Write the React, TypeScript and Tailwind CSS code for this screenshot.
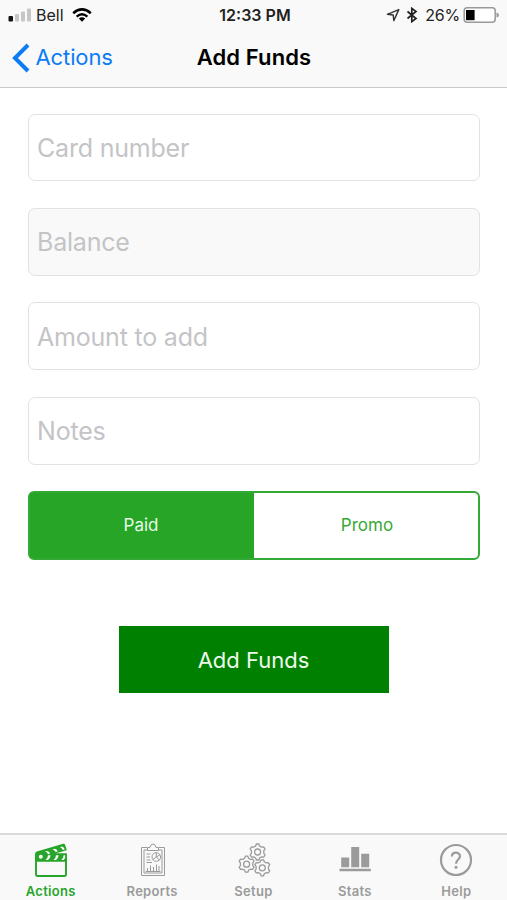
import React, { useState } from 'react';

const ActionsIcon = () => (
  <svg width="34" height="34" viewBox="0 0 34 34" fill="none">
    <path d="M2 11V31.2Q2 33 3.8 33H30.2Q32 33 32 31.2V11" stroke="currentColor" strokeWidth="1.9" />
    <path d="M1.2 10.4Q1.2 8.8 2.8 8.4L29.2 0.8Q30.6 0.5 31 1.6L32.8 7.2L22 10.2H32.8V18.8H1.2Z" fill="currentColor" />
    <circle cx="6.8" cy="13.8" r="2" fill="#f9f9f9" />
    <path d="M10.8 8.6L13 8Q15.4 8.4 16.2 10.6L14 11.2Q13 9 10.8 8.6ZM18.4 6.4L20.6 5.8Q23 6.2 23.8 8.4L21.6 9Q20.6 6.8 18.4 6.4ZM26 4.2L28 3.6Q30 4.2 30.8 6.4L28.8 7Q28 4.6 26 4.2Z" fill="#f9f9f9" />
    <path d="M14 12.2H16.6Q16.4 15.6 14 17H11.4Q13.8 15.4 14 12.2ZM22 12.2H24.6Q24.4 15.6 22 17H19.4Q21.8 15.4 22 12.2ZM29.6 12.2H31.2V14.4Q30.8 16.2 29.6 17H27.2Q29.4 15.4 29.6 12.2Z" fill="#f9f9f9" />
  </svg>
);

const ReportsIcon = () => (
  <svg className="ml-px" width="26" height="34" viewBox="0 0 26 34" fill="none" stroke="currentColor" strokeWidth="1">
    <path d="M7 4.5H1.5V32.5H24.5V4.5H19" />
    <path d="M7.5 7H4V30H22V7H18.5" />
    <path d="M7.5 7.5V4.5H10Q10.5 1 13 1Q15.5 1 16 4.5H18.5V7.5Z" />
    <circle cx="16.3" cy="14" r="4.3" />
    <path d="M16.3 9.7V14L12.8 16.5M16.3 14L20 11.8M16.3 14L19.5 17" />
    <path d="M6.5 11H10.5M6.5 14H10M6.5 17H10.5M6.5 19.5H12" />
    <path d="M5.5 28.5H20.5M7.5 28V25M10.5 28V22.5M13.5 28V24M16.5 28V21.5M19 28V23" />
  </svg>
);

const Gear = ({ x, y }: { x: number; y: number }) => (
  <g transform={`translate(${x} ${y})`}>
    <path d="M-1.2 -8H1.2L2 -6L3.9 -4.9L6.1 -5.1L7.4 -3L6.2 -1.3V1.3L7.4 3L6.1 5.1L3.9 4.9L2 6L1.2 8H-1.2L-2 6L-3.9 4.9L-6.1 5.1L-7.4 3L-6.2 1.3V-1.3L-7.4 -3L-6.1 -5.1L-3.9 -4.9L-2 -6Z" />
    <circle r="3" />
  </g>
);

const SetupIcon = () => (
  <svg className="ml-px" width="34" height="34" viewBox="0 0 34 34" fill="none" stroke="currentColor" strokeWidth="1.3">
    <Gear x={20.6} y={9} />
    <Gear x={9.6} y={21.2} />
    <Gear x={25.3} y={24.8} />
  </svg>
);

const StatsIcon = () => (
  <svg width="34" height="34" viewBox="0 0 34 34" fill="currentColor">
    <path d="M3.2 14.5H11.2V24.3H3.2ZM13.2 4H21.2V24.3H13.2ZM23.2 10.8H31.2V24.3H23.2ZM1.5 25.8H32.8V28.2H1.5Z" />
  </svg>
);

const HelpIcon = () => (
  <svg width="34" height="34" viewBox="0 0 34 34" fill="none" stroke="currentColor">
    <circle cx="17" cy="17" r="15" strokeWidth="2.2" />
    <path d="M12.9 13.6C12.9 8.4 21 8.4 21 13.3C21 16.4 17 16.6 17 20.7" strokeWidth="2.2" />
    <circle cx="17" cy="24.2" r="1.5" fill="currentColor" stroke="none" />
  </svg>
);

const fields = [
  { id: 'card', placeholder: 'Card number', disabled: false },
  { id: 'balance', placeholder: 'Balance', disabled: true },
  { id: 'amount', placeholder: 'Amount to add', disabled: false },
  { id: 'notes', placeholder: 'Notes', disabled: false },
];

const tabs = [
  { id: 'actions', name: 'Actions', icon: <ActionsIcon /> },
  { id: 'reports', name: 'Reports', icon: <ReportsIcon /> },
  { id: 'setup', name: 'Setup', icon: <SetupIcon /> },
  { id: 'stats', name: 'Stats', icon: <StatsIcon /> },
  { id: 'help', name: 'Help', icon: <HelpIcon /> },
];

const StatusBar = () => (
  <div className="grid grid-cols-[1fr_auto_1fr] items-center h-[30px] pl-2 pr-[7px] text-black">
    <div className="flex items-center">
      <svg width="24" height="14" viewBox="0 0 24 14">
        <rect x="0.5" y="8" width="4.5" height="5.5" rx="1" fill="#111" />
        <rect x="7" y="6" width="4" height="7.5" rx="1" fill="#c6c6c6" />
        <rect x="13" y="3.5" width="4" height="10" rx="1" fill="#c6c6c6" />
        <rect x="19" y="0.5" width="4" height="13" rx="1" fill="#c6c6c6" />
      </svg>
      <span className="ml-1 text-[16px] text-[#222]">Bell</span>
      <svg className="ml-2" width="20" height="14" viewBox="0 0 20 14" fill="none" stroke="#000">
        <path d="M1.2 5.2Q10 -2.4 18.8 5.2" strokeWidth="2.5" />
        <path d="M4.6 8.6Q10 4 15.4 8.6" strokeWidth="2.3" />
        <path d="M6.8 10.6Q10 8 13.2 10.6L10 13.8Z" fill="#000" stroke="none" />
      </svg>
    </div>
    <span className="ml-[2px] text-[16px] font-semibold text-[#222]">12:33 PM</span>
    <div className="flex items-center justify-end">
      <svg width="14" height="14" viewBox="0 0 14 14" fill="none" stroke="#333" strokeWidth="1.4">
        <path d="M1.4 6.3L12.8 1.6L7.8 12.6L7.2 7Z" strokeLinejoin="round" />
      </svg>
      <svg className="ml-[6px]" width="12" height="16" viewBox="0 0 12 16" fill="none" stroke="#222" strokeWidth="1.7">
        <path d="M1.5 4.5L10 11.5L5.8 14.6V1.4L10 4.5L1.5 11.5" />
      </svg>
      <span className="ml-[7px] text-[16px] tracking-[-0.2px] text-[#222]">26%</span>
      <svg className="ml-[3px]" width="37" height="16" viewBox="0 0 37 16">
        <rect x="1.2" y="0.8" width="31" height="14.4" rx="3" fill="#fff" stroke="#999" strokeWidth="1.5" />
        <rect x="3" y="3" width="8.6" height="10.2" fill="#000" />
        <path d="M33.5 5.5Q36 6 36 8Q36 10 33.5 10.5Z" fill="#999" />
      </svg>
    </div>
  </div>
);

const App: React.FC = () => {
  const [activeTab, setActiveTab] = useState('actions');
  const [fundType, setFundType] = useState('paid');

  return (
    <div className="flex flex-col w-full h-screen bg-white overflow-hidden font-['Inter',sans-serif]">
      {/* Header */}
      <header className="h-[88px] shrink-0 bg-[#f9f9f9] border-b border-[#c9c9ca]">
        <StatusBar />
        <div className="grid grid-cols-[1fr_auto_1fr] items-center h-[55px] pl-3 pr-[11px]">
          <button className="flex items-center text-[#0b7cf4]">
            <svg width="18" height="30" viewBox="0 0 18 30" fill="none" stroke="currentColor" strokeWidth="4">
              <path d="M16 2L3 15L16 28" />
            </svg>
            <span className="ml-[5.5px] text-[22px] tracking-[-0.1px]">Actions</span>
          </button>
          <h1 className="text-[22px] font-semibold tracking-[0.1px] text-black">Add Funds</h1>
        </div>
      </header>

      {/* Form */}
      <main className="flex-1 px-[27.5px] pt-[25.6px]">
        <div className="flex flex-col gap-[26.6px]">
          {fields.map((field) => (
            <input
              key={field.id}
              placeholder={field.placeholder}
              disabled={field.disabled}
              className="h-[67.8px] w-full rounded-[7px] border-[1.5px] border-[#e2e2e3] bg-white disabled:bg-[#f9f9fa] px-[8.5px] pt-px text-[25px] tracking-[-0.2px] placeholder:text-[#c4c4c7] outline-none"
            />
          ))}
          <div className="flex h-[69px] -mt-[0.3px] rounded-[6px] border-2 border-[#35a935] bg-[#26a526] overflow-hidden text-[17px]">
            <button
              onClick={() => setFundType('paid')}
              className={`flex-1 pt-px ${fundType === 'paid' ? 'bg-[#26a526] text-[#e9fbe9]' : 'bg-white text-[#35a935]'}`}
            >
              <span className="mr-px">Paid</span>
            </button>
            <button
              onClick={() => setFundType('promo')}
              className={`flex-1 pt-px ${fundType === 'promo' ? 'bg-[#26a526] text-[#e9fbe9]' : 'bg-white text-[#35a935]'}`}
            >
              <span className="ml-[3px]">Promo</span>
            </button>
          </div>
        </div>
        <button className="block mx-auto mt-[66px] w-[270px] h-[67px] pt-[2px] bg-[#008000] text-[#edf9ed] text-[22px]">
          Add Funds
        </button>
      </main>

      {/* Tab Bar */}
      <nav className="grid grid-cols-5 h-[67px] shrink-0 bg-[#f9f9f9] border-t-2 border-[#dadadb]">
        {tabs.map((tab) => (
          <button
            key={tab.id}
            onClick={() => setActiveTab(tab.id)}
            className={`flex flex-col items-center pt-2 ${activeTab === tab.id ? 'text-[#26a52a]' : 'text-[#9b9b9b]'}`}
          >
            {tab.icon}
            <span className="mt-[4.5px] text-[13px] leading-[18px] font-semibold tracking-[0.3px]">{tab.name}</span>
          </button>
        ))}
      </nav>
    </div>
  );
};

export default App;
